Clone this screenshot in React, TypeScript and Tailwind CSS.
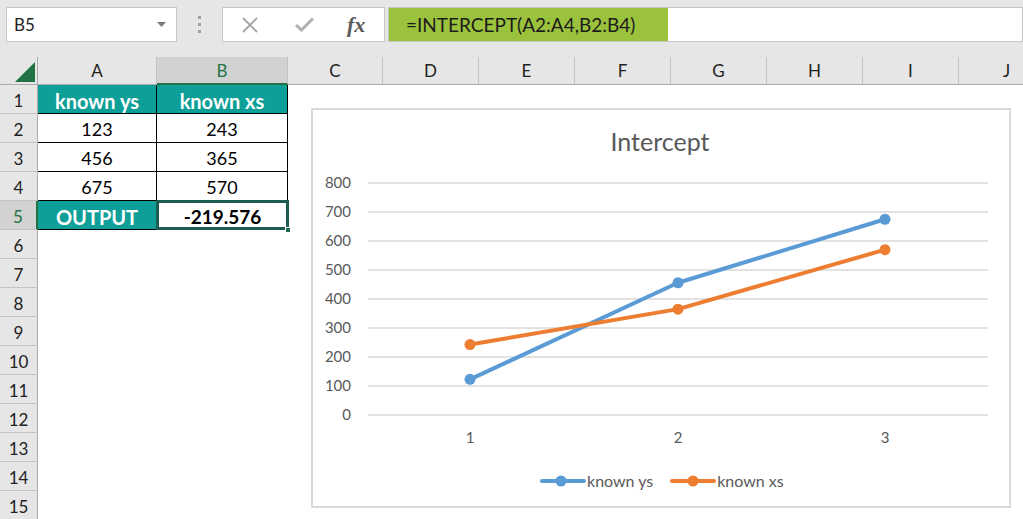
import React from 'react';

const COLS = [
  { k: 'A', w: 119 },
  { k: 'B', w: 131 },
  { k: 'C', w: 95 },
  { k: 'D', w: 96 },
  { k: 'E', w: 96 },
  { k: 'F', w: 96 },
  { k: 'G', w: 96 },
  { k: 'H', w: 96 },
  { k: 'I', w: 96 },
  { k: 'J', w: 96 },
];

const TABLE: Record<number, [string, string]> = {
  1: ['known ys', 'known xs'],
  2: ['123', '243'],
  3: ['456', '365'],
  4: ['675', '570'],
  5: ['OUTPUT', '-219.576'],
};

const ys = [123, 456, 675];
const xs = [243, 365, 570];
const px = [159, 367, 574];
const yOf = (v: number) => 307 - v * 0.29;

function Toolbar() {
  return (
    <div className="h-[57px] bg-[#e6e6e6] relative flex items-start pt-[7px]">
      <div className="ml-[6px] w-[171px] h-[35px] bg-white border border-[#c6c6c6] flex items-center justify-between pl-[7px] pr-[10px]">
        <span className="text-[17px] text-[#222]">B5</span>
        <svg width="9" height="5" viewBox="0 0 9 5"><path d="M0 0h9L4.5 5z" fill="#7a7a7a" /></svg>
      </div>
      <div className="w-[45px] h-[35px] flex flex-col items-center justify-center gap-[4px]">
        <span className="w-[3px] h-[3px] bg-[#a0a0a0]" />
        <span className="w-[3px] h-[3px] bg-[#a0a0a0]" />
        <span className="w-[3px] h-[3px] bg-[#a0a0a0]" />
      </div>
      <div className="w-[163px] h-[35px] bg-white border border-[#c6c6c6] flex items-center">
        <svg className="ml-[19px]" width="16" height="16" viewBox="0 0 16 16">
          <path d="M1 1L15 15M15 1L1 15" stroke="#a3a3a3" strokeWidth="1.8" />
        </svg>
        <svg className="ml-[37px]" width="19" height="15" viewBox="0 0 19 15">
          <path d="M1 8L6.5 13L18 1.5" stroke="#b0b0b0" strokeWidth="3" fill="none" />
        </svg>
        <span className="ml-[33px] text-[22px] italic font-bold text-[#5a5a5a] leading-none" style={{ fontFamily: '"Liberation Serif", serif' }}>
          fx
        </span>
      </div>
      <div className="ml-[3px] flex-1 h-[35px] bg-white border border-[#c6c6c6] flex">
        <div className="w-[279px] h-full bg-[#9bc23c] flex items-center pl-[17px] pt-[1px]">
          <span className="text-[19px] text-[#1b1b1b]">=INTERCEPT(A2:A4,B2:B4)</span>
        </div>
      </div>
    </div>
  );
}

function HeaderRow() {
  return (
    <div className="flex h-[28px]">
      <div className="w-[38px] shrink-0 bg-[#e6e6e6] border-r border-b border-[#ababab] relative">
        <svg className="absolute left-0 top-0" width="38" height="28" viewBox="0 0 38 28">
          <path d="M15 25H35V5z" fill="#217346" />
        </svg>
      </div>
      {COLS.map((c) => (
        <div
          key={c.k}
          style={{ width: c.w }}
          className={
            c.k === 'B'
              ? 'shrink-0 bg-[#d2d2d2] border-r border-[#c4c4c4] border-b-2 border-b-[#217346] flex items-center justify-center pt-[1px] text-[17px] text-[#217346]'
              : 'shrink-0 bg-[#e6e6e6] border-r border-[#c4c4c4] border-b border-b-[#ababab] flex items-center justify-center pt-[1px] text-[17px] text-[#222]'
          }
        >
          {c.k}
        </div>
      ))}
    </div>
  );
}

function Row({ n }: { n: number }) {
  const data = TABLE[n];
  const teal = n === 1 || n === 5;
  return (
    <div className="flex h-[29px]">
      <div
        className={
          n === 5
            ? 'w-[38px] shrink-0 bg-[#d2d2d2] border-r-2 border-r-[#217346] border-b border-[#c4c4c4] flex items-center justify-center pt-[3px] text-[17px] text-[#217346]'
            : 'w-[38px] shrink-0 bg-[#e6e6e6] border-r border-r-[#ababab] border-b border-[#c4c4c4] flex items-center justify-center pt-[3px] text-[17px] text-[#222]'
        }
      >
        {n}
      </div>
      {data ? (
        <>
          <div
            className={
              teal
                ? 'w-[119px] shrink-0 bg-[#0e9f98] border-r border-b border-black flex items-center justify-center pt-[3px] text-[20px] font-bold text-white'
                : 'w-[119px] shrink-0 bg-white border-r border-b border-black flex items-center justify-center pt-[3px] text-[18px] text-black'
            }
          >
            {data[0]}
          </div>
          {n === 5 ? (
            <div className="w-[131px] shrink-0 bg-white relative flex items-center justify-center pt-[3px] text-[19px] font-bold text-black">
              {data[1]}
              <div className="absolute left-[-1px] top-[-1px] right-[-1px] bottom-0 border-[3px] border-[#1e5c52]" />
              <div className="absolute right-[-3px] bottom-[-3px] w-[6px] h-[6px] bg-[#1e6b4a] border border-white" />
            </div>
          ) : (
            <div
              className={
                teal
                  ? 'w-[131px] shrink-0 bg-[#0e9f98] border-r border-b border-black flex items-center justify-center pt-[3px] text-[20px] font-bold text-white'
                  : 'w-[131px] shrink-0 bg-white border-r border-b border-black flex items-center justify-center pt-[3px] text-[18px] text-black'
              }
            >
              {data[1]}
            </div>
          )}
        </>
      ) : null}
      <div className="flex-1 bg-white" />
    </div>
  );
}

function Chart() {
  const grid = [0, 100, 200, 300, 400, 500, 600, 700, 800];
  const line = (vals: number[]) => vals.map((v, i) => `${px[i]},${yOf(v)}`).join(' ');
  return (
    <div className="absolute left-[311px] top-[108px] w-[700px] h-[400px] bg-white border-2 border-[#d9d9d9]">
      <svg width="700" height="400" viewBox="0 0 700 400" className="absolute left-[-2px] top-[-2px]" style={{ fontFamily: 'Lato, sans-serif' }}>
        <text x="349" y="43" textAnchor="middle" fontSize="25" fill="#595959">Intercept</text>
        {grid.map((g) => (
          <g key={g}>
            <line x1="57" x2="677" y1={yOf(g)} y2={yOf(g)} stroke="#d9d9d9" strokeWidth="1.5" />
            <text x="40" y={yOf(g) + 5} textAnchor="end" fontSize="15" fill="#595959">{g}</text>
          </g>
        ))}
        {px.map((x, i) => (
          <text key={x} x={x} y="335" textAnchor="middle" fontSize="15" fill="#595959">{i + 1}</text>
        ))}
        <polyline points={line(ys)} fill="none" stroke="#5b9bd5" strokeWidth="4" strokeLinejoin="round" />
        <polyline points={line(xs)} fill="none" stroke="#ed7d31" strokeWidth="4" strokeLinejoin="round" />
        {ys.map((v, i) => <circle key={'y' + i} cx={px[i]} cy={yOf(v)} r="5.5" fill="#5b9bd5" />)}
        {xs.map((v, i) => <circle key={'x' + i} cx={px[i]} cy={yOf(v)} r="5.5" fill="#ed7d31" />)}
      </svg>
      <div className="absolute left-[227px] top-[359px] flex items-center text-[16px] text-[#595959]">
        <svg width="46" height="12" viewBox="0 0 46 12">
          <line x1="2" x2="44" y1="6" y2="6" stroke="#5b9bd5" strokeWidth="4" strokeLinecap="round" />
          <circle cx="21" cy="6" r="5.5" fill="#5b9bd5" />
        </svg>
        <span className="ml-[1px]">known ys</span>
        <svg className="ml-[17px]" width="46" height="12" viewBox="0 0 46 12">
          <line x1="2" x2="44" y1="6" y2="6" stroke="#ed7d31" strokeWidth="4" strokeLinecap="round" />
          <circle cx="23" cy="6" r="5.5" fill="#ed7d31" />
        </svg>
        <span className="ml-[1px]">known xs</span>
      </div>
    </div>
  );
}

export default function App() {
  return (
    <div className="w-[1023px] h-[519px] overflow-hidden bg-white relative" style={{ fontFamily: 'Lato, "Open Sans", sans-serif' }}>
      <Toolbar />
      <HeaderRow />
      {Array.from({ length: 15 }, (_, i) => (
        <Row key={i} n={i + 1} />
      ))}
      <Chart />
    </div>
  );
}
